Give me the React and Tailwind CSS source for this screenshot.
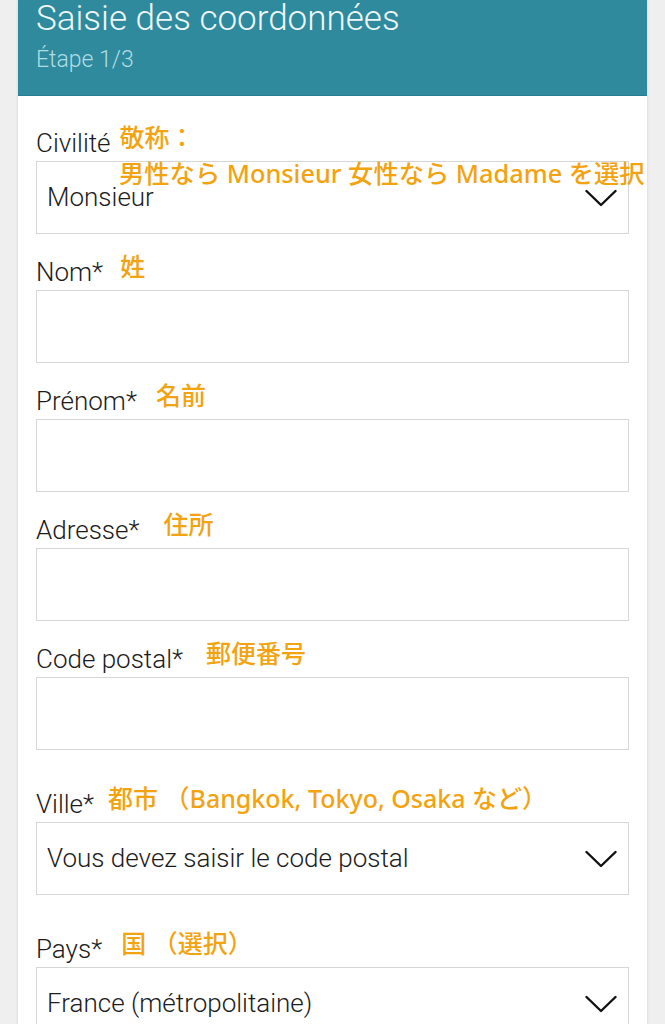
const note = "font-['Noto_Sans','Noto_Sans_CJK_JP',sans-serif] font-medium text-[#f2a30f]"

function Chevron() {
  return (
    <svg width="32" height="18" viewBox="0 0 32 18" fill="none" className="shrink-0">
      <polyline points="1.5,2 16,16 30.5,2" stroke="#111" strokeWidth="2.4" strokeLinecap="round" strokeLinejoin="round" />
    </svg>
  )
}

function Field({ label, hint, hintGap, select, value, wide, children }) {
  return (
    <div className={`relative ${wide ? 'mt-[38px]' : 'mt-[22px]'} first:mt-0`}>
      <div className="flex items-baseline h-[30px] leading-[30px] mb-[4px] whitespace-nowrap">
        <span className="text-[26px] font-light text-[#1c1c1c]">{label}</span>
        {hint && (
          <span className={`${note} text-[25px] relative -top-[5px]`} style={{ marginLeft: hintGap }}>
            {hint}
          </span>
        )}
      </div>
      <div className="h-[73px] border border-[#d6d6d6] bg-white flex items-center justify-between pl-[10px] pr-[11px]">
        <span className="text-[26px] font-light text-[#1c1c1c] whitespace-nowrap">{value}</span>
        {select && <Chevron />}
      </div>
      {children}
    </div>
  )
}

export default function App() {
  return (
    <div className="min-h-[1024px] bg-[#efefef] font-['Roboto',sans-serif] overflow-hidden">
      <div className="mx-[18px] bg-white shadow-[0_0_3px_rgba(0,0,0,0.12)] min-h-[1024px]">
        <div className="bg-[#2e8a9c] px-[18px] pt-[1px] pb-[22px] border-b border-[#287d8e]">
          <h1 className="text-[35px] leading-[36px] font-light text-[#eef7f9] whitespace-nowrap">Saisie des coordonnées</h1>
          <p className="mt-[10px] text-[23px] leading-[26px] font-light text-[#b2dce4]">Étape 1/3</p>
        </div>
        <div className="px-[18px] pt-[31px]">
          <Field label="Civilité" hint="敬称：" hintGap="9px" select value="Monsieur">
            <div className={`${note} absolute left-[83px] top-[31px] text-[25.3px] leading-[30px] whitespace-nowrap`}>
              男性なら Monsieur 女性なら Madame を選択
            </div>
          </Field>
          <Field label="Nom*" hint="姓" hintGap="17px" />
          <Field label="Prénom*" hint="名前" hintGap="19px" />
          <Field label="Adresse*" hint="住所" hintGap="24px" />
          <Field label="Code postal*" hint="郵便番号" hintGap="23px" />
          <Field label="Ville*" hint="都市 （Bangkok, Tokyo, Osaka など）" hintGap="14px" select wide value="Vous devez saisir le code postal" />
          <Field label="Pays*" hint="国 （選択）" hintGap="19px" select wide value="France (métropolitaine)" />
        </div>
      </div>
    </div>
  )
}
